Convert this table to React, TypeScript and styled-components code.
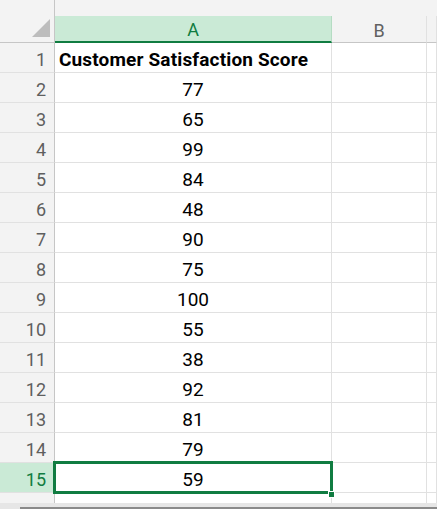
import styled, { createGlobalStyle } from "styled-components"

const GlobalStyle = createGlobalStyle`
    html, body {
        margin: 0;
        padding: 0;
        background: #ffffff;
    }
    body {
        font-family: Roboto, "Liberation Sans", Arial, sans-serif;
    }
`

const GREEN = "#107c41"
const GRID = "#e1e1e1"
const HEAD_LINE = "#c6c6c6"

const Sheet = styled.div`
    width: 437px;
    height: 509px;
    display: flex;
    flex-direction: column;
    overflow: hidden;
    background: #ffffff;
`
const Columns = `
    display: grid;
    grid-template-columns: 55px 277px 95px 1fr;
`
const HeaderRow = styled.div`
    ${Columns}
    height: 43px;
    flex-shrink: 0;
    background: #f3f3f3;
`
const Corner = styled.div`
    border-right: 1px solid ${HEAD_LINE};
    border-bottom: 1px solid ${HEAD_LINE};
    display: flex;
    align-items: flex-end;
    justify-content: flex-end;
    padding: 0 4px 5px 0;
`
const ColHead = styled.div<{ $active?: boolean }>`
    margin-top: 16px;
    display: flex;
    align-items: center;
    justify-content: center;
    font-size: 18px;
    padding-top: 2px;
    color: ${p => p.$active ? GREEN : "#616161"};
    background: ${p => p.$active ? "#caead6" : "#f3f3f3"};
    border-right: 1px solid ${p => p.$active ? "#b5dcc3" : GRID};
    border-bottom: ${p => p.$active ? `2px solid ${GREEN}` : `1px solid ${HEAD_LINE}`};
`
const Body = styled.div`
    flex: 1;
    overflow: hidden;
`
const Row = styled.div`
    ${Columns}
    height: 30px;
`
const RowHead = styled.div<{ $active?: boolean }>`
    display: flex;
    align-items: center;
    justify-content: flex-end;
    padding: 4px 8px 0 0;
    font-size: 18px;
    color: ${p => p.$active ? GREEN : "#5f5f5f"};
    background: ${p => p.$active ? "#caead6" : "#f3f3f3"};
    border-right: 1px solid ${HEAD_LINE};
    border-bottom: 1px solid ${GRID};
`
const Cell = styled.div<{ $bold?: boolean; $align?: string }>`
    position: relative;
    display: flex;
    align-items: center;
    justify-content: ${p => p.$align || "center"};
    padding-left: ${p => p.$align === "flex-start" ? "4px" : "0"};
    padding-top: 4px;
    font-size: 19px;
    font-weight: ${p => p.$bold ? 700 : 400};
    letter-spacing: ${p => p.$bold ? "0.15px" : "0"};
    color: #000000;
    white-space: nowrap;
    border-right: 1px solid ${GRID};
    border-bottom: 1px solid ${GRID};
`
const Selection = styled.div`
    position: absolute;
    z-index: 2;
    left: -2px;
    top: -2px;
    right: -2px;
    bottom: -2px;
    border: 3px solid ${GREEN};
    pointer-events: none;
`
const Handle = styled.span`
    position: absolute;
    right: -5px;
    bottom: -7px;
    width: 5px;
    height: 5px;
    background: ${GREEN};
    border: 1px solid #ffffff;
`
const ScrollRow = styled.div`
    display: flex;
    height: 6px;
    flex-shrink: 0;
    background: #e6e6e6;
`
const ScrollTrack = styled.div`
    flex: 1;
    margin-left: 20px;
    border-bottom: 2px solid #8a8a8a;
`

const scores = [77, 65, 99, 84, 48, 90, 75, 100, 55, 38, 92, 81, 79, 59]

function App() {
    return (
        <>
            <GlobalStyle />
            <Sheet>
                <HeaderRow>
                    <Corner>
                        <svg width="18" height="18" viewBox="0 0 18 18">
                            <polygon points="18,0 18,18 0,18" fill="#bdbdbd" />
                        </svg>
                    </Corner>
                    <ColHead $active>A</ColHead>
                    <ColHead>B</ColHead>
                    <ColHead />
                </HeaderRow>
                <Body>
                    <Row>
                        <RowHead>1</RowHead>
                        <Cell $bold $align="flex-start">Customer Satisfaction Score</Cell>
                        <Cell />
                        <Cell />
                    </Row>
                    {scores.map((s, i) => {
                        const n = i + 2
                        const active = n === 15
                        return (
                            <Row key={n}>
                                <RowHead $active={active}>{n}</RowHead>
                                <Cell>
                                    {s}
                                    {active && <Selection><Handle /></Selection>}
                                </Cell>
                                <Cell />
                                <Cell />
                            </Row>
                        )
                    })}
                    <Row>
                        <RowHead>16</RowHead>
                        <Cell />
                        <Cell />
                        <Cell />
                    </Row>
                </Body>
                <ScrollRow>
                    <ScrollTrack />
                </ScrollRow>
            </Sheet>
        </>
    )
}

export default App
